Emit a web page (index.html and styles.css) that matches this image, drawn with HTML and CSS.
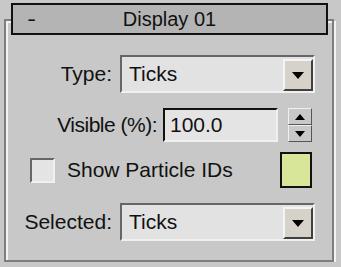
FILE: index.html
```html
<!DOCTYPE html>
<html lang="en">
<head>
	<meta charset="UTF-8">
	<title>Display 01</title>
	<link rel="stylesheet" href="styles.css">
</head>
<body>
	<div class="rollout">
		<div class="title">
			<span class="toggle">-</span>
			<span class="name">Display 01</span>
		</div>
		<div class="frame">
			<div class="row row-combo">
				<span class="label">Type:</span>
				<div class="combo"><span class="value">Ticks</span><span class="drop"></span></div>
			</div>
			<div class="row row-visible">
				<span class="label">Visible (%):</span>
				<div class="field">100.0</div>
				<div class="spinner"><span class="up"></span><span class="down"></span></div>
			</div>
			<div class="row row-check">
				<span class="check"></span>
				<span class="check-label">Show Particle IDs</span>
				<span class="swatch"></span>
			</div>
			<div class="row row-combo row-selected">
				<span class="label">Selected:</span>
				<div class="combo"><span class="value">Ticks</span><span class="drop"></span></div>
			</div>
		</div>
	</div>
</body>
</html>
```

FILE: styles.css
```css
*{margin:0;padding:0;box-sizing:border-box;}
body{background:#c8c8c8;font-family:"Liberation Sans",Arial,sans-serif;font-size:21px;color:#111;}
.rollout{padding-top:3px;}
/* title bar */
.title{position:relative;z-index:1;margin-left:11px;width:317px;height:32px;border:2px solid #111;background:#b4b4b4;display:grid;grid-template-columns:1fr auto 1fr;align-items:center;font-size:20px;}
.toggle{padding-left:11px;transform:scaleX(1.3);transform-origin:left center;}
/* etched group frame */
.frame{margin:-16px 0 0 4px;width:330px;height:243px;border:2px solid #7e7e7e;box-shadow:inset 2px 2px 0 #f2f2f2,2px 2px 0 #f2f2f2;padding:34px 17px 0 0;}
.row{display:flex;align-items:center;justify-content:flex-end;}
.label{margin-right:8px;}
/* combo box */
.row-combo{height:38px;}
.row-selected{margin-top:15px;}
.combo{width:195px;height:38px;display:flex;align-items:center;background:#e2e2e2;border:2px solid;border-color:#666 #f0f0f0 #f0f0f0 #666;}
.combo .value{flex:1;padding-left:7px;}
.drop{width:30px;height:32px;margin-top:2px;align-self:flex-start;background:#d6d2ca;border:2px solid;border-color:#f4f4f4 #404040 #404040 #f4f4f4;display:flex;align-items:center;justify-content:center;}
.drop::after{content:"";border-left:6px solid transparent;border-right:6px solid transparent;border-top:7px solid #000;}
/* spinner field */
.row-visible{margin-top:15px;height:34px;padding-right:3px;}
.row-visible .label{margin-right:6px;letter-spacing:-0.5px;}
.field{width:115px;height:34px;background:#e4e4e4;border:2px solid;border-color:#111 #f0f0f0 #f0f0f0 #111;padding-left:5px;line-height:30px;}
.spinner{margin-left:10px;width:24px;height:34px;display:flex;flex-direction:column;}
.spinner span{flex:1;display:flex;align-items:center;justify-content:center;background:#c8c8c8;border:1px solid;border-color:#f0f0f0 #555 #555 #f0f0f0;}
.up::after{content:"";border-left:5px solid transparent;border-right:5px solid transparent;border-bottom:6px solid #000;}
.down::after{content:"";border-left:5px solid transparent;border-right:5px solid transparent;border-top:6px solid #000;}
/* checkbox row */
.row-check{margin-top:10px;height:36px;justify-content:flex-start;padding-left:24px;padding-right:3px;}
.check{width:25px;height:25px;background:#e4e4e4;border:2px solid;border-color:#666 #f0f0f0 #f0f0f0 #666;}
.check-label{margin-left:12px;flex:1;}
.swatch{width:32px;height:36px;border:2px solid #111;background:#d8e69a;}
```
